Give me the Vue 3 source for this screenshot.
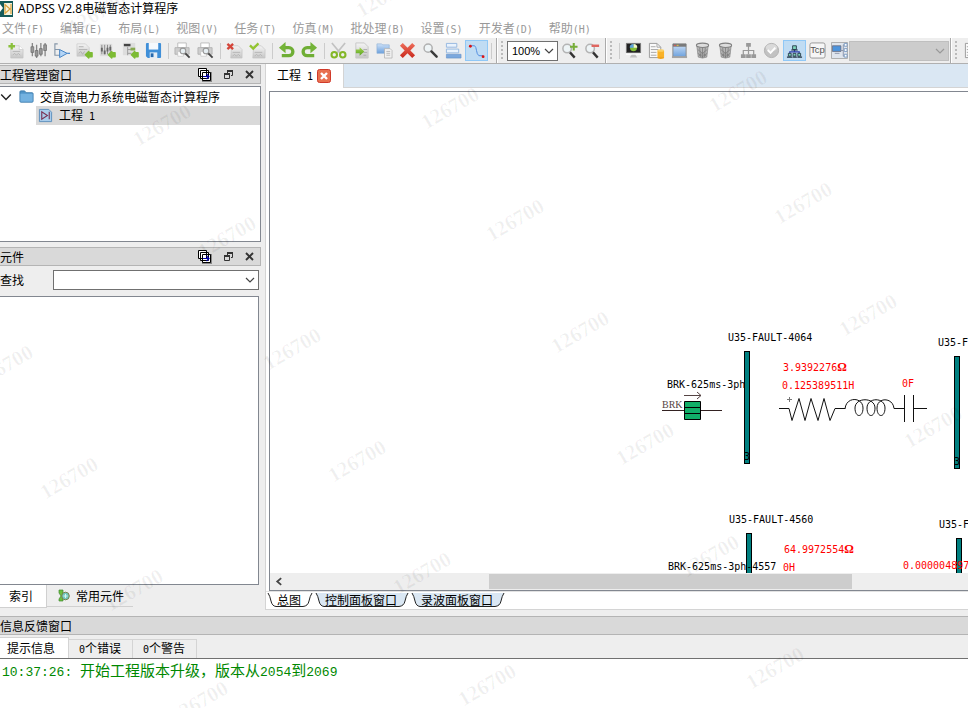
<script setup>
import { h, ref } from 'vue'

// Splits a string into CJK and Latin runs so that each run gets its own face.
const Mixed = (props) =>
  h(
    'span',
    { class: 'mixed' },
    props.text
      .split(/([\x20-\x7e]+)/)
      .filter(Boolean)
      .map((run) => (/^[\x20-\x7e]/.test(run) ? h('span', { class: 'latin' }, run) : run))
  )
Mixed.props = ['text']

const menus = ['文件(F)', '编辑(E)', '布局(L)', '视图(V)', '任务(T)', '仿真(M)', '批处理(B)', '设置(S)', '开发者(D)', '帮助(H)']

const mainTools = [
  ['new', 'sliders', 'logic', 'doc-run', 'sliders-run', 'tree-run', 'save'],
  ['print-view', 'print-view'],
  ['doc-x', 'doc-check'],
  ['undo', 'redo'],
  ['cut', 'import', 'copy', 'delete', 'find', 'align', 'curve']
]
const runTools = ['monitor', 'doc-db', 'window', 'trash', 'trash', 'hierarchy', 'ok', 'network', 'tcp', 'remote']
const checked = ['curve', 'network']

const sheets = ref(['总图', '控制面板窗口', '录波面板窗口'])
const messageTabs = ['提示信息', '0个错误', '0个警告']
const thumb = { left: 29.6, width: 53.4 }

const buses = [
  { x: 474, y: 259, label: 'U35-FAULT-4064', lx: 458, ly: 249 },
  { x: 684, y: 264, label: 'U35-F', lx: 668, ly: 254 },
  { x: 476, y: 441, label: 'U35-FAULT-4560', lx: 459, ly: 431 },
  { x: 686, y: 446, label: 'U35-F', lx: 669, ly: 436 }
]
const names = [
  { x: 397, y: 296, text: 'BRK-625ms-3ph' },
  { x: 398, y: 478, text: 'BRK-625ms-3ph-4557' }
]
const values = [
  { x: 513, y: 279, text: '3.9392276', unit: 'Ω' },
  { x: 512, y: 297, text: '0.125389511H' },
  { x: 632, y: 295, text: '0F' },
  { x: 514, y: 461, text: '64.9972554', unit: 'Ω' },
  { x: 513, y: 479, text: '0H' },
  { x: 633, y: 477, text: '0.000004897' }
]

const marks = []
for (let j = -1; j <= 5; j++) {
  for (let i = -3; i <= 2; i++) {
    const x = 450 + 288 * i + 65 * j
    const y = 108 - 17 * i + 112 * j
    if (x > -40 && x < 1000 && y > -30 && y < 740) marks.push({ x, y })
  }
}
</script>

<template>
  <div class="app">
    <svg class="defs" aria-hidden="true">
      <defs>
        <linearGradient id="gGreen" x1="0" y1="0" x2="0" y2="1"><stop offset="0" stop-color="#a5d64f" /><stop offset="1" stop-color="#5aa323" /></linearGradient>
        <linearGradient id="gBlue" x1="0" y1="0" x2="0" y2="1"><stop offset="0" stop-color="#cfe2f8" /><stop offset="1" stop-color="#6a9fdc" /></linearGradient>
        <linearGradient id="gGrey" x1="0" y1="0" x2="0" y2="1"><stop offset="0" stop-color="#f4f4f4" /><stop offset="1" stop-color="#c6c6c6" /></linearGradient>
        <linearGradient id="gRed" x1="0" y1="0" x2="0" y2="1"><stop offset="0" stop-color="#ee6f5c" /><stop offset="1" stop-color="#c9281b" /></linearGradient>
      </defs>
      <symbol id="i-new" viewBox="0 0 18 18">
        <path d="M6 4h7l4 4v9H4V8z" fill="url(#gGrey)" stroke="#c2c2c2" stroke-width=".7" /><path d="M13 4v4h4" fill="#fff" stroke="#bbb" stroke-width=".6" />
        <path d="M6 10h8M6 14l2-2 2 2 2-2 2 2" stroke="#b5b5b5" fill="none" /><path d="M5 1v7M1.500 4.500h7" stroke="#8ac03c" stroke-width="2.400" />
      </symbol>
      <symbol id="i-sliders" viewBox="0 0 18 18">
        <path d="M2.500 1v14M7 3v14M11.500 1v14M16 1v14" stroke="#888" stroke-width="1.400" />
        <path d="M1 5h3v6H1zM5.500 9h3v6h-3zM10 7h3v6h-3zM14.500 3h3v6h-3z" fill="#999" stroke="#666" stroke-width=".7" />
      </symbol>
      <symbol id="i-logic" viewBox="0 0 18 18">
        <path d="M5 2H2v12h5M2 8h5" fill="none" stroke="#8596a8" stroke-width="1.200" /><path d="M15 12h3" stroke="#4a86c8" stroke-width="1.300" /><path d="M7 8l8 4-8 4.500z" fill="#b4d5f6" stroke="#3f80c4" />
      </symbol>
      <symbol id="i-doc-run" viewBox="0 0 18 18">
        <path d="M1 2h9l4 4v9H1z" fill="url(#gGrey)" stroke="#c8c8c8" stroke-width=".7" /><path d="M3 5h5M3 8h9M3 12l2-2 2 3 2-3" stroke="#b0b0b0" fill="none" />
        <path d="M10 13.500l3.500-3.500v1.500H17v4h-3.500V17z" fill="#7dbb34" stroke="#7dbb34" stroke-width="1.600" stroke-linejoin="round" />
      </symbol>
      <symbol id="i-sliders-run" viewBox="0 0 18 18">
        <path d="M1 2h13v13H1z" fill="#ddd" /><path d="M3 3v10M6 3v10M9 3v10M12 3v10" stroke="#888" /><path d="M2 6h2v4H2zM5 9h2v4H5zM8 6h2v4H8zM11 5h2v4h-2z" fill="#666" />
        <path d="M10 13.500l3.500-3.500v1.500H17v4h-3.500V17z" fill="#7dbb34" stroke="#7dbb34" stroke-width="1.600" stroke-linejoin="round" />
      </symbol>
      <symbol id="i-tree-run" viewBox="0 0 18 18">
        <path d="M1 1h13v13H1z" fill="#ddd" /><path d="M2 2h7v2.500H2z" fill="#444" /><path d="M6 5v9M6 8h4M6 12h4" stroke="#999" /><path d="M9 6h5v3H9z" fill="#86a94f" />
        <path d="M10 13.500l3.500-3.500v1.500H17v4h-3.500V17z" fill="#7dbb34" stroke="#7dbb34" stroke-width="1.600" stroke-linejoin="round" />
      </symbol>
      <symbol id="i-save" viewBox="0 0 18 18">
        <path d="M1 2q0-1 1-1h14q1 0 1 1v14q0 1-1 1H3l-2-2z" fill="#3f8fd8" /><path d="M4 1h10v7H4z" fill="#f5f9fd" /><path d="M5 11h8v6H5z" fill="#e4edf6" /><path d="M6 12h3v4H6z" fill="#2568ad" />
      </symbol>
      <symbol id="i-print-view" viewBox="0 0 18 18">
        <path d="M4 1h9v5H4z" fill="#fff" stroke="#bbb" /><path d="M1 6h15v7H1z" fill="#cecece" stroke="#aaa" stroke-width=".8" /><path d="M4 10h6v5H4z" fill="#fff" stroke="#bbb" stroke-width=".6" />
        <circle cx="9.500" cy="9.500" r="3" fill="#e6eef2" stroke="#999" stroke-width="1.100" /><path d="M12 12l4.500 4.500" stroke="#444" stroke-width="2" />
      </symbol>
      <symbol id="i-doc-x" viewBox="0 0 18 18">
        <path d="M6 4h7l4 4v9H5z" fill="url(#gGrey)" stroke="#c2c2c2" stroke-width=".7" /><path d="M7 11h8M7 15l2-2 2 2 2-2 2 2" stroke="#b5b5b5" fill="none" /><path d="M1.500 2l6 5.500M7.500 2l-6 5.500" stroke="#d4453a" stroke-width="2.500" />
      </symbol>
      <symbol id="i-doc-check" viewBox="0 0 18 18">
        <path d="M5 4h8l4 4v9H4z" fill="url(#gGrey)" stroke="#c2c2c2" stroke-width=".7" /><path d="M6 11h8M6 15l2-2 2 2 2-2 2 2" stroke="#b5b5b5" fill="none" /><path d="M1 3.500L4.500 7 10 1.500" stroke="#93c530" stroke-width="2.500" fill="none" />
      </symbol>
      <symbol id="i-undo" viewBox="0 0 18 18">
        <path d="M6 6h5.500a4.200 4.200 0 0 1 0 8.500H4" fill="none" stroke="#6fae35" stroke-width="3.500" /><path d="M8 0v12L1 6z" fill="#74b438" />
      </symbol>
      <symbol id="i-redo" viewBox="0 0 18 18">
        <path d="M12 6H6.500a4.200 4.200 0 0 0 0 8.500H14" fill="none" stroke="#6fae35" stroke-width="3.500" /><path d="M10 0v12l7-6z" fill="#74b438" />
      </symbol>
      <symbol id="i-cut" viewBox="0 0 18 18">
        <path d="M2 1l9 11M16 1L7 12" stroke="#c2c2c2" stroke-width="1.800" /><circle cx="4.500" cy="13.500" r="2.900" fill="none" stroke="#84b728" stroke-width="2.200" /><circle cx="13.500" cy="13.500" r="2.900" fill="none" stroke="#84b728" stroke-width="2.200" />
      </symbol>
      <symbol id="i-import" viewBox="0 0 18 18">
        <path d="M3 1h9l4 4v12H3z" fill="url(#gGrey)" stroke="#c8c8c8" /><path d="M11 8h4M11 11h4M11 14h3" stroke="#aaa" /><path d="M3 8h4V5.500l5 4.500-5 4.500V12H3z" fill="url(#gGreen)" />
      </symbol>
      <symbol id="i-copy" viewBox="0 0 18 18">
        <path d="M1 2h5l1 1h7v9H1z" fill="url(#gBlue)" stroke="#8fb2d8" stroke-width=".7" /><path d="M9 7h6l2 2v8H9z" fill="#f1f1f1" stroke="#b0b0b0" stroke-width=".8" /><path d="M11 10h4M11 12h4M11 14h4" stroke="#aaa" stroke-width=".8" />
      </symbol>
      <symbol id="i-delete" viewBox="0 0 18 18"><path d="M1 4l3-3 5 5 5-5 3 3-5 5 5 5-3 3-5-5-5 5-3-3 5-5z" fill="url(#gRed)" /></symbol>
      <symbol id="i-find" viewBox="0 0 18 18">
        <circle cx="6.500" cy="6.500" r="4.300" fill="#eef4f6" stroke="#b0b0b0" stroke-width="1.600" /><path d="M10 10l5.500 5.500" stroke="#3a3a3a" stroke-width="2.600" stroke-linecap="round" />
      </symbol>
      <symbol id="i-align" viewBox="0 0 18 18">
        <path d="M1.500 1.500h11v4h-11zM1.500 7.500h13v4h-13z" fill="#eaf3fd" stroke="#94b7df" /><path d="M1.500 13h15.500v4H1.500z" fill="#7ba8de" stroke="#5f8dc6" stroke-width=".6" />
      </symbol>
      <symbol id="i-curve" viewBox="0 0 18 18">
        <path d="M3 4h4q1.500 1 2 5t2.500 5.500H16" fill="none" stroke="#4f8be0" /><circle cx="2.500" cy="4.500" r="1.500" fill="#d11" /><circle cx="16" cy="15.500" r="1.500" fill="#d11" />
      </symbol>
      <symbol id="i-zoom-in" viewBox="0 0 18 18">
        <circle cx="6.500" cy="7" r="4.500" fill="#eef4f6" stroke="#b4b4b4" stroke-width="1.600" /><path d="M9.500 11l5 5.500" stroke="#333" stroke-width="2.500" /><path d="M13.500 1v8M9.500 5h8" stroke="#76ad38" stroke-width="2.200" />
      </symbol>
      <symbol id="i-zoom-out" viewBox="0 0 18 18">
        <circle cx="6.500" cy="7" r="4.500" fill="#eef4f6" stroke="#b4b4b4" stroke-width="1.600" /><path d="M9.500 11l5 5.500" stroke="#333" stroke-width="2.500" /><path d="M8 4h8" stroke="#df6660" stroke-width="2.600" />
      </symbol>
      <symbol id="i-monitor" viewBox="0 0 18 18">
        <path d="M1.500 1.500h15v10h-15z" fill="#222" stroke="#777" /><circle cx="9" cy="6" r="3.700" fill="#84bd35" /><path d="M9 6V2a4 4 0 0 1 4 4z" fill="#f5f7cb" /><path d="M9 6H5a4 4 0 0 1 4-4z" fill="#5ea3e0" /><path d="M1 12h16v1.500H1z" fill="#fff" /><path d="M7 13.500h4l2 3H5z" fill="#c2c2c2" />
      </symbol>
      <symbol id="i-doc-db" viewBox="0 0 18 18">
        <path d="M1.500 1.500h8l4 4v11h-12z" fill="#fafafa" stroke="#999" /><path d="M3 5h5M3 8h8M3 11h6M3 14h6M9.500 1.500v4h4" stroke="#a5a5a5" fill="none" /><path d="M10 9h7v8h-7z" fill="#f9b227" /><ellipse cx="13.500" cy="9" rx="3.500" ry="1.300" fill="#fbd066" /><ellipse cx="13.500" cy="16.700" rx="3.500" ry="1.200" fill="#f0a31c" />
      </symbol>
      <symbol id="i-window" viewBox="0 0 18 18">
        <path d="M2 2h14v14H2z" fill="url(#gBlue)" stroke="#888" /><path d="M2 2h14v3H2z" fill="#7a7a7a" /><path d="M3 3h2v1H3z" fill="#e55" /><path d="M6 3h2v1H6z" fill="#ec4" /><path d="M1 15h16v2H1z" fill="#a4a4a4" />
      </symbol>
      <symbol id="i-trash" viewBox="0 0 18 18">
        <path d="M3 4h12l-1.500 12q-4.500 2-9 0z" fill="#b5b5b5" stroke="#8a8a8a" stroke-width=".8" /><path d="M6 6l1 10M9 6v11M12 6l-1 10M4 8l9 7M14 8l-9 7M4 12l6 4M14 12l-6 4" stroke="#7c7c7c" stroke-width=".8" /><ellipse cx="9" cy="3.500" rx="6.500" ry="2.300" fill="#ddd" stroke="#808080" stroke-width="1.100" />
      </symbol>
      <symbol id="i-hierarchy" viewBox="0 0 18 18">
        <path d="M9 4v9M3.500 14V9h11v5" fill="none" stroke="#999" stroke-width="1.300" /><path d="M6.500 1h5v4h-5zM1 13h5v4H1zM6.500 13h5v4h-5zM12 13h5v4h-5z" fill="#999" />
      </symbol>
      <symbol id="i-ok" viewBox="0 0 18 18">
        <circle cx="9" cy="9" r="7.500" fill="#c2c2c2" stroke="#b0b0b0" /><ellipse cx="9" cy="6" rx="6" ry="4" fill="#dadada" /><path d="M5 8.500L8 11.500 13 6" fill="none" stroke="#fff" stroke-width="2" />
      </symbol>
      <symbol id="i-network" viewBox="0 0 18 18">
        <path d="M9 8v3M4 13v-2.500h10V13" fill="none" stroke="#2c3ba8" stroke-width="1.200" /><path d="M7 4h4v4H7zM2.500 12h3v3h-3zM7.500 12h3v3h-3zM12.500 12h3v3h-3z" fill="#7fd6bb" stroke="#234" stroke-width=".9" /><path d="M5.500 8.500h7M1 16h6M7.500 16h4M12 16h5" stroke="#234" stroke-width="1.100" />
      </symbol>
      <symbol id="i-tcp" viewBox="0 0 18 18">
        <rect x="1" y="1" width="16" height="16" rx="2" fill="#f6f6f6" stroke="#969696" /><text x="9" y="12" text-anchor="middle" class="tcp-text">Tcp</text>
      </symbol>
      <symbol id="i-remote" viewBox="0 0 18 18">
        <path d="M.500 .500h17v17H.500z" fill="#dfe5ed" stroke="#aaa" /><path d="M1.500 4h9v6h-9z" fill="#4d94dc" stroke="#667" stroke-width=".8" /><path d="M4 12h5M13 3v12M10 9h3M13 3h2M13 15h2" stroke="#8a94a8" /><path d="M14 1.500h3v3h-3zM14 7h3v3h-3zM14 13h3v3h-3z" fill="#fff" stroke="#7c9cc4" />
      </symbol>
      <symbol id="i-stack" viewBox="0 0 16 17">
        <path d="M5 15h9M14 6v10" fill="none" stroke="#888" stroke-width="2" /><path d="M1.500 2.500h8v8h-8zM3.500 4.500h8v8h-8zM5.500 6.500h8v8h-8z" fill="#fff" stroke="#000" /><path d="M6 10.500h6M9.500 8l2.500 2.500L9.500 13" fill="none" stroke="#00a" stroke-width="1.200" />
      </symbol>
      <symbol id="i-restore" viewBox="0 0 11 11"><path d="M4.500 4V1.500h5v5H8M1.500 4.500h5v5h-5z" fill="none" stroke="#333" /><path d="M4 2h6M1 5h6" stroke="#333" stroke-width="2" /></symbol>
      <symbol id="i-close" viewBox="0 0 11 11"><path d="M2 2l7 7M9 2l-7 7" stroke="#333" stroke-width="1.900" /></symbol>
      <symbol id="i-chevron" viewBox="0 0 10 10"><path d="M1 3l4 4 4-4" fill="none" stroke="currentColor" stroke-width="1.200" /></symbol>
    </svg>

    <header class="titlebar">
      <svg class="logo" viewBox="0 0 13 16" aria-hidden="true">
        <path d="M0 0h13v16H0z" fill="#155b5a" /><path d="M4 2h8v12H4z" fill="#f5f3dd" /><path d="M0 3l3 4-3 4z" fill="#fff" /><path d="M5 3.500v9L10 8zM11 3v10" fill="none" stroke="#d9a13c" stroke-width="1.200" />
      </svg>
      <span class="title">ADPSS V2.8电磁暂态计算程序</span>
    </header>

    <nav class="menubar">
      <button v-for="m in menus" :key="m" class="menu"><Mixed :text="m" /></button>
    </nav>

    <div class="toolbars">
      <div class="toolbar first">
        <template v-for="(group, g) in mainTools" :key="g">
          <button v-for="(icon, k) in group" :key="k" class="tool" :class="{ on: checked.includes(icon) }" :aria-label="icon">
            <svg class="icon"><use :href="'#i-' + icon" /></svg>
          </button>
          <i class="sep"></i>
        </template>
      </div>
      <div class="toolbar">
        <i class="grip"></i>
        <div class="combo zoom">
          <select aria-label="缩放"><option>100%</option></select>
          <svg class="chev"><use href="#i-chevron" /></svg>
        </div>
        <button class="tool" aria-label="zoom in"><svg class="icon"><use href="#i-zoom-in" /></svg></button>
        <button class="tool" aria-label="zoom out"><svg class="icon"><use href="#i-zoom-out" /></svg></button>
      </div>
      <div class="toolbar">
        <i class="grip"></i>
        <i class="sep"></i>
        <button v-for="(icon, k) in runTools" :key="k" class="tool" :class="{ on: checked.includes(icon), slim: icon === 'remote' }" :aria-label="icon">
          <svg class="icon"><use :href="'#i-' + icon" /></svg>
        </button>
        <div class="combo task">
          <select aria-label="任务" disabled><option></option></select>
          <svg class="chev"><use href="#i-chevron" /></svg>
        </div>
      </div>
      <div class="toolbar last">
        <i class="grip"></i>
        <button class="tool" aria-label="report"><svg class="icon"><use href="#i-doc-db" /></svg></button>
      </div>
    </div>

    <div class="workspace">
      <aside class="side">
        <section class="dock">
          <div class="dock-head">
            <h2>工程管理窗口</h2>
            <button class="head-btn wide" aria-label="stack"><svg class="stack"><use href="#i-stack" /></svg></button>
            <button class="head-btn" aria-label="float"><svg class="mini"><use href="#i-restore" /></svg></button>
            <button class="head-btn" aria-label="close"><svg class="mini"><use href="#i-close" /></svg></button>
          </div>
          <div class="tree">
            <div class="node root">
              <svg class="twist"><use href="#i-chevron" /></svg>
              <svg class="folder" viewBox="0 0 16 16"><path d="M1 3q0-1 1-1h4l1.500 2H14q1 0 1 1v8q0 1-1 1H2q-1 0-1-1z" fill="#4f94c8" stroke="#3e7cab" /><path d="M1.500 5h13v8.500h-13z" fill="#74b2e0" /></svg>
              <span>交直流电力系统电磁暂态计算程序</span>
            </div>
            <div class="node child">
              <svg class="folder" viewBox="0 0 16 16"><path d="M1.500 1.500h10l3 3v10h-13z" fill="#a9cdec" stroke="#5d8fbc" /><path d="M4 4v8l6-4zM12 4v8" fill="none" stroke="#7a3155" stroke-width="1.200" /></svg>
              <Mixed text="工程 1" />
            </div>
          </div>
        </section>

        <section class="dock grow">
          <div class="dock-head">
            <h2>元件</h2>
            <button class="head-btn wide" aria-label="stack"><svg class="stack"><use href="#i-stack" /></svg></button>
            <button class="head-btn" aria-label="float"><svg class="mini"><use href="#i-restore" /></svg></button>
            <button class="head-btn" aria-label="close"><svg class="mini"><use href="#i-close" /></svg></button>
          </div>
          <div class="search">
            <label for="lookup">查找</label>
            <div class="combo lookup">
              <select id="lookup"><option></option></select>
              <svg class="chev"><use href="#i-chevron" /></svg>
            </div>
          </div>
          <div class="list"></div>
          <div class="side-tabs">
            <button class="side-tab current">索引</button>
            <button class="side-tab">
              <svg class="part" viewBox="0 0 12 14"><path d="M1 1h4v3l2 2-2 3v3H1v-2l2-3-2-3z" fill="#6cbf3c" stroke="#3f8a35" stroke-width=".7" /><circle cx="7.500" cy="7" r="3.800" fill="#72c8bf" stroke="#77804a" /><path d="M7.500 5v4M5.500 7h4" stroke="#d7f3ee" /></svg>
              常用元件
            </button>
          </div>
        </section>
      </aside>

      <main class="editor">
        <div class="doc-tabs">
          <div class="doc-tab">
            <Mixed text="工程 1" />
            <button class="doc-close" aria-label="close"><svg viewBox="0 0 14 14"><rect x=".5" y=".5" width="13" height="13" rx="2" fill="#e8704f" stroke="#d03a2a" /><path d="M4 4l6 6M10 4l-6 6" stroke="#fff" stroke-width="2.400" /></svg></button>
          </div>
        </div>
        <div class="frame">
          <svg class="diagram">
            <g v-for="b in buses" :key="b.x">
              <text :x="b.lx" :y="b.ly" class="name">{{ b.label }}</text>
              <rect :x="b.x + 0.5" :y="b.y + 0.5" width="5" height="112" fill="#008080" stroke="#000" />
              <text :x="b.x" :y="b.y + 109" class="name">3</text>
            </g>
            <text v-for="n in names" :key="n.text" :x="n.x" :y="n.y" class="name">{{ n.text }}</text>
            <text v-for="v in values" :key="v.text" :x="v.x" :y="v.y" class="value">{{ v.text }}<tspan v-if="v.unit" class="unit">{{ v.unit }}</tspan></text>
            <g fill="none" stroke="#000">
              <text x="392" y="316" class="ref" stroke="none">BRK</text>
              <path d="M392 318.500h22M431 318.500h21" stroke="#322" />
              <path d="M414.500 309.500h16v18h-16z" fill="#10ae68" /><path d="M414 315.500h17M414 321.500h17" />
              <path d="M414 303.500h17M427 300l4 3.500-4 3.500" stroke="#544" />
              <path d="M509 316.500h10l3 12 7-22 6 22 6-22 7 22 6-22 6 22 5-12h10" stroke="#111" />
              <path d="M575 317C576 304 593 305 593 316C593 326 585 326 585 316C585 305 605 305 605 316C605 326 597 326 597 316C597 305 615 305 615 316C615 326 607 326 607 316C607 305 623 305 624 316.500H634.500M634.500 303v27M643.500 303v27M643.500 316.500H657" stroke="#111" />
              <path d="M517 307.500h5M519.500 305v5" stroke="#777" />
            </g>
          </svg>
          <div class="hscroll">
            <button class="scroll-btn" aria-label="scroll left"><svg viewBox="0 0 8 8"><path d="M5.500 1L2 4l3.500 3" fill="none" stroke="#444" stroke-width="1.600" /></svg></button>
            <div class="track"><div class="thumb" :style="{ marginLeft: thumb.left + '%', width: thumb.width + '%' }"></div></div>
          </div>
        </div>
        <div class="sheets">
          <button v-for="(s, k) in sheets" :key="s" class="sheet" :class="{ current: k === 0 }">
            <svg class="edge-l" viewBox="0 0 10 14"><path d="M1 0Q3 3 4 8T9 13.500H10V0z" class="fill" /><path d="M1 0Q3 3 4 8T9 13.500H10" fill="none" stroke="#222" /></svg>
            <span>{{ s }}</span>
            <svg class="edge-r" viewBox="0 0 12 14"><path d="M11 0Q9 3 8 8T2 13.500H0V0z" class="fill" /><path d="M11 0Q9 3 8 8T2 13.500H0" fill="none" stroke="#222" /></svg>
          </button>
        </div>
      </main>
    </div>

    <section class="messages">
      <div class="dock-head flat"><h2>信息反馈窗口</h2></div>
      <div class="msg-tabs">
        <button v-for="(t, k) in messageTabs" :key="t" class="msg-tab" :class="{ current: k === 0 }"><Mixed :text="t" /></button>
      </div>
      <div class="output"><Mixed text="10:37:26: 开始工程版本升级，版本从2054到2069" /></div>
    </section>

    <div class="watermarks" aria-hidden="true">
      <span v-for="(m, k) in marks" :key="k" class="mark" :style="{ left: m.x + 'px', top: m.y + 'px' }">126700</span>
    </div>
  </div>
</template>

<style>
body { margin: 0; }
.mixed { white-space: pre; }
.mixed .latin { font-family: 'DejaVu Sans Mono', monospace; font-size: 10px; }
.output .mixed .latin { font-family: 'Liberation Mono', monospace; font-size: 13px; }
.tcp-text { font: 10px 'Liberation Sans', sans-serif; fill: #555; }
</style>

<style scoped>
.app {
  position: relative;
  display: flex;
  flex-direction: column;
  min-height: 100vh;
  overflow: hidden;
  background: #eee;
  color: #000;
  font-family: 'Noto Sans CJK SC', sans-serif;
  font-size: 12px;
  line-height: 16px;
}
button { margin: 0; padding: 0; border: 0; background: none; font: inherit; color: inherit; }
h2 { margin: 0; font: inherit; }
svg { display: block; flex: none; }
.defs { position: absolute; width: 0; height: 0; }

.titlebar { display: flex; align-items: center; gap: 5px; height: 17px; background: #fff; }
.logo { width: 13px; height: 16px; }
.title { font-family: 'Noto Sans', 'Noto Sans CJK SC', sans-serif; white-space: nowrap; }
.menubar { display: flex; align-items: center; gap: 16px; height: 21px; padding: 2px 0 0 2px; box-sizing: border-box; background: #fff; color: #999; }
.menu { white-space: nowrap; }

.toolbars { display: flex; height: 25px; border-bottom: 1px solid #b0b0b0; background: #eee; overflow: hidden; }
.toolbar { display: flex; flex: none; align-items: center; padding-right: 1px; border-right: 1px solid #aaa; box-shadow: 1px 0 #fff; }
.toolbar.first { padding: 0 2px 0 4px; }
.toolbar.last { border: 0; }
.tool { display: flex; flex: none; align-items: center; justify-content: center; box-sizing: border-box; width: 23px; height: 21px; }
.tool.slim { width: 20px; }
.tool.on { background: #c0dcf3; border: 1px solid #90c8f6; }
.icon { width: 17px; height: 17px; }
.sep { flex: none; width: 6px; height: 16px; background: linear-gradient(#ccc, #ccc) center / 1px 100% no-repeat; }
.grip { flex: none; width: 2px; height: 19px; margin: 0 4px; background: repeating-linear-gradient(#bbb 0 2px, transparent 2px 4px); }

.combo { position: relative; flex: none; }
.combo select { display: block; box-sizing: border-box; width: 100%; height: 20px; margin: 0; padding: 0 4px; border: 1px solid #707070; border-radius: 0; background: #fff; color: #000; font: 11px 'Liberation Sans', sans-serif; appearance: none; }
.combo select:disabled { border-color: #bfbfbf; background: #ccc; opacity: 1; }
.chev { position: absolute; right: 4px; top: 5px; width: 10px; height: 10px; color: #444; pointer-events: none; }
.zoom { width: 51px; }
.task { width: 100px; }
.task .chev { color: #999; }

.workspace { display: flex; flex: 1; min-height: 0; }
.side { display: flex; flex: none; flex-direction: column; gap: 5px; width: 261px; padding-top: 1px; }
.dock { display: flex; flex-direction: column; }
.dock.grow { flex: 1; }
.dock-head { display: flex; align-items: center; box-sizing: border-box; height: 19px; border: 1px solid #b4b4b4; border-left: 0; background: #d9d9d9; }
.dock-head h2 { flex: 1; white-space: nowrap; }
.head-btn { display: flex; align-items: center; justify-content: center; width: 21px; height: 17px; }
.head-btn.wide { width: 26px; }
.stack { width: 16px; height: 17px; }
.mini { width: 11px; height: 11px; }

.tree { box-sizing: border-box; height: 156px; margin-top: 2px; border: 1px solid #828790; border-left: 0; background: #fff; }
.node { display: flex; align-items: center; height: 19px; white-space: nowrap; }
.root { gap: 6px; }
.twist { width: 12px; height: 12px; margin-right: 1px; color: #222; }
.folder { width: 15px; height: 15px; }
.child { gap: 6px; margin-left: 36px; padding-left: 2px; background: #d9d9d9; }

.search { display: flex; align-items: center; justify-content: space-between; height: 28px; padding: 0 2px 2px 0; }
.lookup { width: 206px; }
.list { flex: 1; margin-right: 2px; border: 1px solid #828790; border-left: 0; background: #fff; }
.side-tabs { display: flex; align-items: flex-start; height: 31px; }
.side-tab { display: flex; align-items: center; gap: 6px; height: 22px; padding: 0 9px 0 11px; border-bottom: 1px solid #d0d0d0; white-space: nowrap; }
.side-tab.current { height: 23px; padding: 0 13px 0 9px; border-right: 1px solid #d0d0d0; background: #fff; }
.part { width: 12px; height: 14px; }

.editor { display: flex; flex: 1; flex-direction: column; min-width: 0; margin: 0 0 6px 4px; border-left: 1px solid #d4d4d4; border-bottom: 1px solid #d4d4d4; background: #fff; }
.doc-tabs { display: flex; height: 23px; border-bottom: 1px solid #d4d4d4; background: #dae7f3; }
.doc-tab { display: flex; align-items: center; gap: 4px; height: 24px; padding: 0 12px 0 11px; border-right: 1px solid #d4d4d4; background: #fff; }
.doc-close svg { width: 14px; height: 14px; }
.frame { display: flex; flex: 1; flex-direction: column; margin: 3px 0 0 3px; border: 1px solid #828790; border-right: 0; }
.diagram { flex: 1; width: 100%; min-height: 0; overflow: hidden; }
.name, .value { font: 10px 'DejaVu Sans Mono', monospace; }
.value { fill: #f00; }
.unit { font: bold 12px 'Liberation Serif', serif; }
.ref { font: 10px 'Liberation Serif', serif; fill: #544; }
.hscroll { display: flex; height: 17px; background: #eee; }
.scroll-btn { display: flex; align-items: center; justify-content: center; width: 18px; }
.scroll-btn svg { width: 9px; height: 9px; }
.track { flex: 1; padding-top: 1px; }
.thumb { height: 15px; background: #cdcdcd; }

.sheets { display: flex; gap: 2px; height: 18px; padding: 1px 0 0 1px; box-sizing: border-box; border-top: 1px solid #e2e2e2; }
.sheet { display: flex; height: 14px; line-height: 13px; white-space: nowrap; }
.sheet span { height: 13px; border-bottom: 1px solid #222; background: #dae7f3; }
.sheet .fill { fill: #dae7f3; }
.sheet.current span { background: #fff; }
.sheet.current .fill { fill: #fff; }
.edge-l { width: 10px; height: 14px; }
.edge-r { width: 12px; height: 14px; }

.messages { flex: none; }
.dock-head.flat { border-right: 0; }
.msg-tabs { display: flex; align-items: flex-end; height: 23px; }
.msg-tab { display: flex; align-items: center; box-sizing: border-box; height: 19px; padding: 0 11px 0 10px; border: 1px solid #d4d4d4; border-width: 1px 1px 0 0; white-space: nowrap; }
.msg-tab.current { height: 21px; padding: 0 13px 0 7px; background: #fff; }
.output { min-height: 50px; border-top: 1px solid #707070; padding-left: 2px; box-sizing: border-box; background: #fff; color: #080; font-size: 15px; line-height: 22px; }

.watermarks { position: absolute; inset: 0; overflow: hidden; pointer-events: none; }
.mark { position: absolute; color: rgba(0, 0, 0, 0.06); font: bold 21px/24px 'Liberation Serif', serif; transform: translate(-50%, -50%) rotate(-30deg); }
</style>
